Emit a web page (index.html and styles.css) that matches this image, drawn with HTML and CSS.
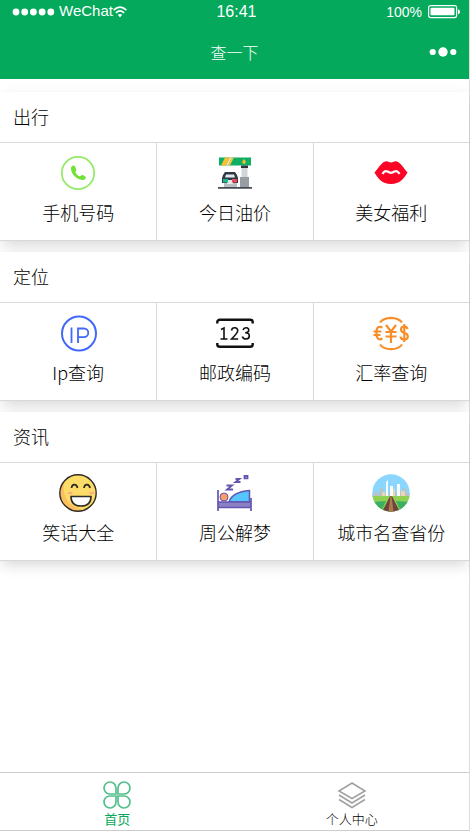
FILE: index.html
```html
<!DOCTYPE html>
<html lang="zh-CN">
<head>
<meta charset="utf-8">
<meta name="viewport" content="width=device-width, initial-scale=1">
<title>查一下</title>
<link rel="stylesheet" href="styles.css">
</head>
<body>
<div class="phone">
  <header class="top">
    <div class="status">
      <div class="carrier">
        <svg class="signal" viewBox="0 0 43 8" aria-hidden="true"><g fill="#fff"><circle cx="4" cy="4" r="3.4"/><circle cx="12.700" cy="4" r="3.400"/><circle cx="21.400" cy="4" r="3.400"/><circle cx="30.100" cy="4" r="3.400"/><circle cx="38.800" cy="4" r="3.400"/></g></svg>
        <span>WeChat</span>
        <svg class="wifi" viewBox="0 0 14 12" aria-hidden="true"><g fill="none" stroke="#fff" stroke-width="1.700"><path d="M.6 4.200Q7-1.800 13.400 4.200"/><path d="M2.900 6.800Q7 3 11.100 6.800"/></g><path d="M4.800 8.800Q7 7 9.200 8.800L7 11.400z" fill="#fff"/></svg>
      </div>
      <time class="clock">16:41</time>
      <div class="power">
        <span>100%</span>
        <svg class="battery" viewBox="0 0 33 14" aria-hidden="true"><rect x=".6" y=".6" width="28" height="12" rx="2" fill="none" stroke="#fff" stroke-width="1.200"/><rect x="2.500" y="2.700" width="24" height="7.600" rx="1" fill="#fff"/><path d="M30 4.200q2 .3 2 2.500t-2 2.500z" fill="#fff"/></svg>
      </div>
    </div>
    <div class="navbar">
      <h1>查一下</h1>
      <button class="more" type="button" aria-label="更多"><svg viewBox="0 0 28 10" aria-hidden="true"><g fill="#fff"><circle cx="3.700" cy="5" r="3.100"/><circle cx="14" cy="5" r="4.700"/><circle cx="24.300" cy="5" r="3.100"/></g></svg></button>
    </div>
  </header>

  <main>
    <section class="card">
      <h2>出行</h2>
      <div class="grid">
        <a class="item" href="#phone">
          <svg viewBox="0 0 38 38" aria-hidden="true"><circle cx="19" cy="19" r="16.200" fill="none" stroke="#93ea66" stroke-width="1.700"/><path d="M12 14.500c0-2.600 2.800-4 4-1.900l1.300 3c.5 1.500-1 2-.8 3 1 2 2.500 3.200 4.100 3.700 1.400.2 1.600-1.700 3.200-1.200l2.500 1.300c1.500 1.200-.4 3.700-3 3.600-6-.5-11.300-6.200-11.300-11.500z" fill="#72e236"/></svg>
          <span>手机号码</span>
        </a>
        <a class="item" href="#oil">
          <svg viewBox="0 0 38 38" aria-hidden="true"><path fill="#0caf63" d="M3 3.500h32v8H3z"/><path fill="#fbbf31" d="M9 3.500h5l-4 8H5zM16 3.500h2l-4 8h-2z"/><path fill="#f3e8b8" d="M14 3.500h2l-4 8h-2z"/><path fill="#fbbf31" d="M28 5q3.500 4 0 5-3.500-1 0-5"/><path fill="#30353b" d="M25 11.500h7v2.500h-7z"/><path fill="#d2d5d8" d="M25.500 14h6v9.500h-6z"/><path fill="#979da3" d="M24 23h9v10.500h-9z"/><path fill="#b9bec3" d="M8 29h13v4H8z"/><path fill="#303946" d="M9 18h10l2 3 1 3v5H6v-5l1-3z"/><path fill="#e2e9ed" d="M10 20.500h8l1 3H9zM11 26h6v4h-6z"/><path fill="#19b886" d="M7 25h5v3.500H7z"/><path fill="#e9475b" d="M16 25h5v3.500h-5z"/><path fill="#454b52" d="M2 33h34v1.700H2z"/></svg>
          <span>今日油价</span>
        </a>
        <a class="item" href="#beauty">
          <svg viewBox="0 0 38 38" aria-hidden="true"><path fill="#fb0425" d="M2.500 18.500C6 14.500 10 7.500 14 7.200c2.500-.2 3 1.300 5 1.300s2.500-1.500 5-1.300c4 .3 8 7.300 11.500 11.300C32 24.500 28 30 19 30S6 24.500 2.500 18.500z"/><path d="M10.500 20q2-4 5-2.500 2 1.300 3.500 1.300t3.500-1.300q3-1.500 5 2.500" fill="none" stroke="#fff" stroke-width="2.200"/></svg>
          <span>美女福利</span>
        </a>
      </div>
    </section>

    <section class="card">
      <h2>定位</h2>
      <div class="grid">
        <a class="item" href="#ip">
          <svg viewBox="0 0 38 38" aria-hidden="true"><g fill="none" stroke="#4168fb"><circle cx="20" cy="19.500" r="17" stroke-width="2"/><path stroke-width="1.800" d="M12.500 13.500v15.500M19 29V14.500h6a4.300 4.300 0 0 1 0 8.600h-6"/></g></svg>
          <span>Ip查询</span>
        </a>
        <a class="item" href="#post">
          <svg viewBox="0 0 38 38" aria-hidden="true"><g fill="none" stroke="#111"><path stroke-width="2.400" d="M1.300 9.500V8Q1.300 5.800 4 5.800h30q2.700 0 2.700 2.200V9.500M1.300 29v1.500Q1.300 32.800 4 32.800h30q2.700 0 2.700-2.300V29"/><path stroke-width="1.600" d="M5 15.500L8 14V25M4.500 25h7M15.500 16.500q.5-2.900 3.300-2.700 3.100.2 2.900 3.200-.2 2-6.200 8h6.700M27 16q.8-2.400 3.200-2.200 2.700.2 2.500 2.700-.1 2.200-3.500 2.300 4 0 4.100 2.900.1 3.100-3.200 3.300-3.100 0-3.800-2.500"/></g></svg>
          <span>邮政编码</span>
        </a>
        <a class="item" href="#rate">
          <svg viewBox="0 0 38 38" aria-hidden="true"><g fill="none" stroke="#f88e2a" stroke-width="2.200"><path d="M8 8.500q3-4.500 11-4.700 8 .2 11 4.700M8 30.500q3 4.500 11 4.700 8-.2 11-4.700"/><path d="M10.500 13.500q-5-2.300-6 3v5q1 5.500 6 3M1.500 17.500h8M1.500 21h7"/><path d="M14 11l5 6.500 5-6.500M19 17v12M13.500 18h11M13.500 22.500h11"/><path d="M35.500 15q-.5-2.500-3.300-2.500-3.200 0-3.200 3 0 2.500 3.200 3.300 3.600 1 3.600 3.800 0 3-3.600 3-3.200 0-3.700-3M32.300 10v18"/></g></svg>
          <span>汇率查询</span>
        </a>
      </div>
    </section>

    <section class="card">
      <h2>资讯</h2>
      <div class="grid">
        <a class="item" href="#joke">
          <svg viewBox="0 0 38 38" aria-hidden="true"><circle cx="19" cy="19" r="18.200" fill="#fddc68"/><path d="M6 6C-4 17 1 35 17 37q6 .5 10-1C11 35 1 22 6 6z" fill="#fbc05d"/><circle cx="19" cy="19" r="18.200" fill="none" stroke="#302c27" stroke-width="1.400"/><path d="M12.500 14q.5-3.500 3-3.300t3 3.300M25 14q.5-3.500 3-3.300t3 3.300" fill="none" stroke="#302c27" stroke-width="1.700"/><g fill="#ffab86"><ellipse cx="11" cy="19" rx="2.500" ry="1.300"/><ellipse cx="33" cy="19" rx="2.500" ry="1.300"/></g><path d="M12 22.500h20q0 9.500-10 9.500t-10-9.500z" fill="#fff" stroke="#302c27" stroke-width="1.600"/></svg>
          <span>笑话大全</span>
        </a>
        <a class="item" href="#dream">
          <svg viewBox="0 0 38 38" aria-hidden="true"><g fill="none" stroke="#6256b1" stroke-width="1.800"><path d="M10.500 11.500h5.500l-5 4h6M19.500 5h4l-4 3h5M28.500 2h3v2.400h-3z"/></g><path fill="#55c5fc" stroke="#6256b1" stroke-width="1.500" d="M13 28q3-10 20.500-11.500V28z"/><circle cx="8" cy="23" r="4" fill="#fa9f68" stroke="#6256b1"/><path fill="#8b80c4" d="M2 28h33v5H2z"/><path fill="none" stroke="#6256b1" stroke-width="1.700" d="M2 16v21M35 24v13M2 28h33M2 33.500h33"/></svg>
          <span>周公解梦</span>
        </a>
        <a class="item" href="#city">
          <svg viewBox="0 0 38 38" aria-hidden="true"><defs><clipPath id="city-clip"><circle cx="19" cy="19" r="18.700"/></clipPath></defs><g clip-path="url(#city-clip)"><path fill="#8bd6ff" d="M0 0h38v38H0z"/><path fill="#b4c4c8" d="M0 20h3v-3h3v2h2v-5h3v5h14v-4h3v3h3v-4h3v5h4v4H0z"/><path fill="#f6fbfd" d="M14 22V8l2-2v16zM18 22V12h3v10zM25 22V10h3v12z"/><path fill="#eed4b0" d="M10 22v-4h3v4zM21 22v-7h2v7zM29 22v-5h4v5z"/><path fill="#8fd253" d="M0 22h38v16H0z"/><path fill="#3daf62" d="M0 28l14-1-5 11H0zM38 28l-14-1 5 11h9z"/><path fill="#70443e" d="M18 22h2l8 16H10z"/><path fill="#b1794e" d="M18.500 22h1l2 16h-5z"/></g></svg>
          <span>城市名查省份</span>
        </a>
      </div>
    </section>
  </main>

  <nav class="tabs">
    <a class="tab active" href="#home">
      <svg viewBox="0 0 30 28" aria-hidden="true"><g fill="none" stroke="#52c08c" stroke-width="1.700"><path d="M14 13H7.500A6 6 0 1 1 14 7zM16 13h6.500A6 6 0 1 0 16 7zM14 15H7.500A6 6 0 1 0 14 21zM16 15h6.500A6 6 0 1 1 16 21z"/></g></svg>
      <span>首页</span>
    </a>
    <a class="tab" href="#me">
      <svg viewBox="0 0 30 28" aria-hidden="true"><g fill="none" stroke="#a2a2a2" stroke-width="1.600"><path d="M15 2l13 8-13 7.500L2 10zM2 14l13 8 13-8M2 18.500l13 8 13-8"/></g></svg>
      <span>个人中心</span>
    </a>
  </nav>
</div>
</body>
</html>
```
FILE: styles.css
```css
* {
  box-sizing: border-box;
}

body {
  margin: 0;
  background: #fff;
  color: #000;
  font-family: "Liberation Sans", "Noto Sans CJK SC", sans-serif;
}

a {
  color: inherit;
  text-decoration: none;
}

h1,
h2 {
  margin: 0;
  font-weight: 300;
}

svg {
  display: block;
}

.phone {
  display: flex;
  flex-direction: column;
  min-height: 100vh;
  border-right: 1px solid #ddd;
  border-bottom: 1px solid #ccc;
}

.top {
  background: #04a95c;
  color: #fff;
}

.status,
.navbar {
  display: grid;
  grid-template-columns: 1fr auto 1fr;
  align-items: center;
  padding: 0 12px;
}

.status {
  height: 24px;
  padding-right: 8px;
}

.carrier,
.power {
  display: flex;
  align-items: center;
  font-size: 15px;
  line-height: 22px;
}

.carrier span {
  padding-bottom: 2px;
}

.signal {
  width: 43px;
  height: 8px;
  margin-right: 4px;
}

.wifi {
  width: 14px;
  height: 12px;
}

.clock {
  font-size: 16px;
}

.power {
  justify-content: flex-end;
  gap: 6px;
  font-size: 14px;
}

.power svg {
  width: 33px;
  height: 14px;
}

.navbar {
  height: 55px;
}

.navbar h1 {
  grid-column: 2;
  font-size: 16px;
  font-family: "Noto Sans CJK SC", sans-serif;
}

.more {
  justify-self: end;
  padding: 0;
  border: 0;
  background: none;
}

.more svg {
  width: 28px;
  height: 10px;
}

main {
  flex: 1;
  display: flex;
  flex-direction: column;
  gap: 11px;
  padding: 13px 0;
}

.card {
  background: #fff;
  border-bottom: 1px solid #d9d9d9;
  box-shadow: 0 5px 14px -2px rgba(0, 0, 0, 0.18);
  font-family: "Noto Sans CJK SC", sans-serif;
  font-weight: 300;
}

.card h2 {
  padding: 0 13px 2px;
  font-size: 18px;
  line-height: 48px;
}

.grid {
  display: grid;
  grid-template-columns: repeat(3, 1fr);
  border-top: 1px solid #d9d9d9;
}

.item {
  display: flex;
  flex-direction: column;
  align-items: center;
  height: 97px;
  padding-top: 11px;
  font-size: 18px;
  line-height: 24px;
}

.item + .item {
  border-left: 1px solid #d9d9d9;
}

.item svg {
  width: 38px;
  height: 38px;
  margin-bottom: 8px;
}

.tabs {
  display: grid;
  grid-template-columns: 1fr 1fr;
  border-top: 1px solid #ccc;
}

.tab {
  display: flex;
  flex-direction: column;
  align-items: center;
  height: 57px;
  padding-top: 8px;
  font-family: "Noto Sans CJK SC", sans-serif;
  font-size: 13px;
  font-weight: 300;
  line-height: 20px;
}

.tab svg {
  width: 30px;
  height: 28px;
}

.active {
  color: #04a95c;
  font-weight: 400;
}
```
